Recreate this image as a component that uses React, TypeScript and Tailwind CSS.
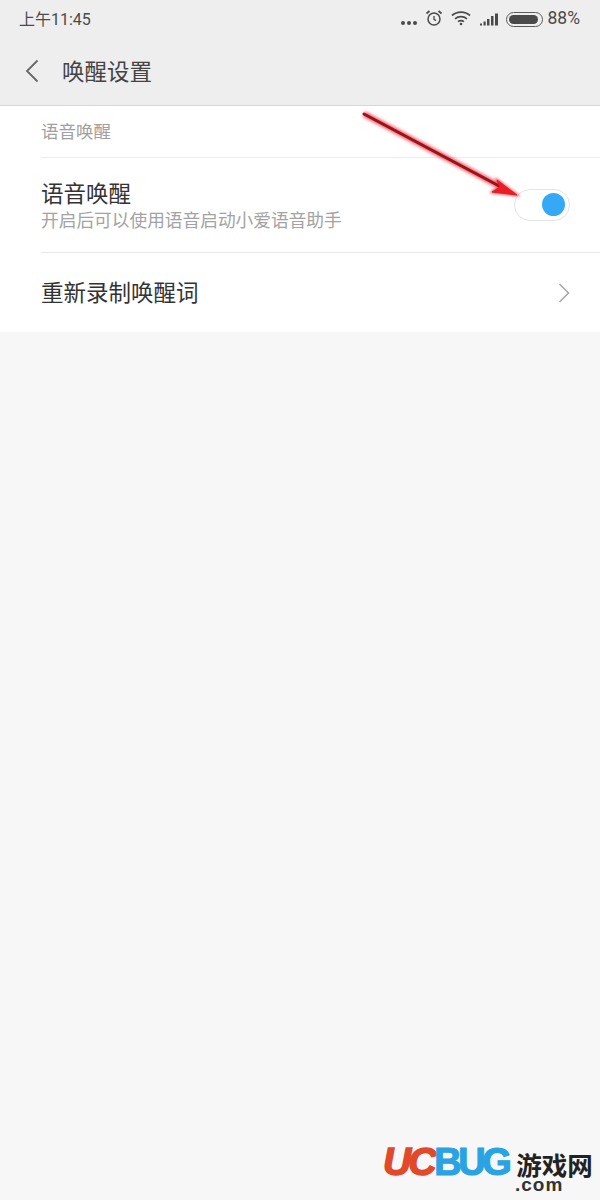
const sans = "font-['Roboto','Noto_Sans_CJK_SC',sans-serif]";

function StatusIcons() {
  return (
    <div className="flex items-center text-[#4a4a4a]">
      <div className="flex gap-[2px] mt-[7px] mr-[8px]">
        <span className="w-[4px] h-[4px] rounded-full bg-[#4a4a4a]"></span>
        <span className="w-[4px] h-[4px] rounded-full bg-[#4a4a4a]"></span>
        <span className="w-[4px] h-[4px] rounded-full bg-[#4a4a4a]"></span>
      </div>
      <svg width="18" height="18" viewBox="0 0 18 18" fill="none" stroke="#4a4a4a" className="mr-[8px] -mt-[3px]">
        <circle cx="9" cy="10" r="6" strokeWidth="1.5" />
        <path d="M9 7v3.4l2 1.2" strokeWidth="1.3" />
        <path d="M1.5 4.5 4.5 2M16.5 4.5 13.5 2" strokeWidth="1.8" />
      </svg>
      <svg width="20" height="16" viewBox="0 0 20 16" fill="none" stroke="#4a4a4a" strokeWidth="1.7" className="mr-[9px] -mt-[2px]">
        <path d="M1 5.5c5-4.6 13-4.6 18 0" />
        <path d="M4 8.8c3.400-3 8.600-3 12 0" />
        <path d="M7 11.700c1.800-1.400 4.200-1.400 6 0" />
        <circle cx="10" cy="14" r="1.300" fill="#4a4a4a" stroke="none" />
      </svg>
      <svg width="19" height="13" viewBox="0 0 19 13" fill="#4a4a4a" className="mr-[7px]">
        <rect x="0" y="10.500" width="2" height="2" />
        <rect x="3.500" y="8.500" width="2.200" height="4" />
        <rect x="7" y="6" width="2.500" height="6.500" />
        <rect x="11" y="3" width="2.500" height="9.500" />
        <rect x="15" y="0.500" width="3" height="12" />
      </svg>
      <div className="w-[37px] h-[15px] rounded-full border border-[#5a5a5a] p-[2px] mr-[5px] flex">
        <div className="w-[29px] h-full rounded-full bg-[#4a4a4a]"></div>
      </div>
      <span className="text-[17.500px] leading-none">88%</span>
    </div>
  );
}

function Arrow() {
  return (
    <svg width="170" height="100" viewBox="0 0 170 100" className="absolute left-[355px] top-[107px]">
      <defs>
        <filter id="glow" x="-20%" y="-30%" width="140%" height="160%">
          <feGaussianBlur stdDeviation="1.600" />
        </filter>
      </defs>
      <path d="M9 7 146 80" stroke="#e0303a" strokeOpacity="0.7" strokeWidth="6" filter="url(#glow)" />
      <path d="M162 88 142 73 145 80 137 85Z" fill="#e0303a" fillOpacity="0.6" stroke="#e0303a" strokeWidth="2" filter="url(#glow)" />
      <path d="M9 7 146 80" stroke="#a01018" strokeWidth="3" strokeLinecap="round" />
      <path d="M162 88 142 73 145 80 137 85Z" fill="#ec1c24" stroke="#e0202a" strokeWidth="1" />
    </svg>
  );
}

function Watermark() {
  return (
    <div className="absolute left-[383px] top-[1143px] w-[217px] h-[52px]">
      <div className="flex items-start">
        <span className="font-['Liberation_Sans',sans-serif] italic font-bold text-[39px] leading-[38px] tracking-[-3px] text-[#e2482a] [-webkit-text-stroke:1.500px_#e2482a]">
          UC
        </span>
        <span className="font-['Liberation_Sans',sans-serif] font-bold text-[38px] leading-[38px] tracking-[-3.500px] ml-[1px] text-[#2aa3e2] [-webkit-text-stroke:1.200px_#2aa3e2]">
          BUG
        </span>
        <span className="font-['Noto_Sans_CJK_SC',sans-serif] font-bold text-[25.500px] leading-[23px] ml-[8px] mt-[9px] text-[#222222] whitespace-nowrap">
          游戏网
        </span>
      </div>
      <div className="absolute left-[132px] top-[32px] font-['Liberation_Sans',sans-serif] font-bold text-[19px] leading-[20px] tracking-[1px] text-[#333333]">
        .com
      </div>
    </div>
  );
}

export default function App() {
  return (
    <div className={`relative w-[600px] h-[1200px] overflow-hidden bg-[#f7f7f7] ${sans}`}>
      <div className="h-[106px] bg-[#eeeeee] border-b border-[#d8d8d8]">
        <div className="h-[38px] pl-[19px] pr-[20px] flex items-center justify-between">
          <span className="text-[16px] text-[#4a4a4a] mt-[1px]">上午11:45</span>
          <StatusIcons />
        </div>
        <div className="h-[67px] flex items-center pl-[25px]">
          <svg width="14" height="24" viewBox="0 0 14 24" fill="none" stroke="#666666" strokeWidth="1.800" className="-mt-[1px]">
            <path d="M12.500 1.500 2 12l10.500 10.500" />
          </svg>
          <span className="ml-[23px] mt-[2px] text-[22.500px] text-[#444444]">唤醒设置</span>
        </div>
      </div>
      <div className="bg-white h-[226px] pl-[41px]">
        <div className="h-[52px] pt-[1px] flex items-center border-b border-[#ececec] text-[17.500px] text-[#a0a0a0]">
          语音唤醒
        </div>
        <div className="h-[95px] flex items-center justify-between pr-[30px] border-b border-[#e8e8e8]">
          <div className="mt-[1px]">
            <div className="text-[22.500px] leading-[30px] text-[#333333]">语音唤醒</div>
            <div className="text-[17.700px] leading-[24px] text-[#a3a3a3]">开启后可以使用语音启动小爱语音助手</div>
          </div>
          <div className="w-[56px] h-[32px] -mt-[1px] rounded-full border border-[#e4e4e4] bg-white flex items-center justify-end pr-[4px]">
            <div className="w-[23px] h-[23px] rounded-full bg-[#35a9f5]"></div>
          </div>
        </div>
        <div className="h-[79px] flex items-center justify-between pr-[30px]">
          <span className="text-[22.500px] mt-[2px] text-[#333333]">重新录制唤醒词</span>
          <svg width="12" height="20" viewBox="0 0 12 20" fill="none" stroke="#a8a8a8" strokeWidth="1.600">
            <path d="M1.500 1 10.500 10l-9 9" />
          </svg>
        </div>
      </div>
      <Arrow />
      <Watermark />
    </div>
  );
}
